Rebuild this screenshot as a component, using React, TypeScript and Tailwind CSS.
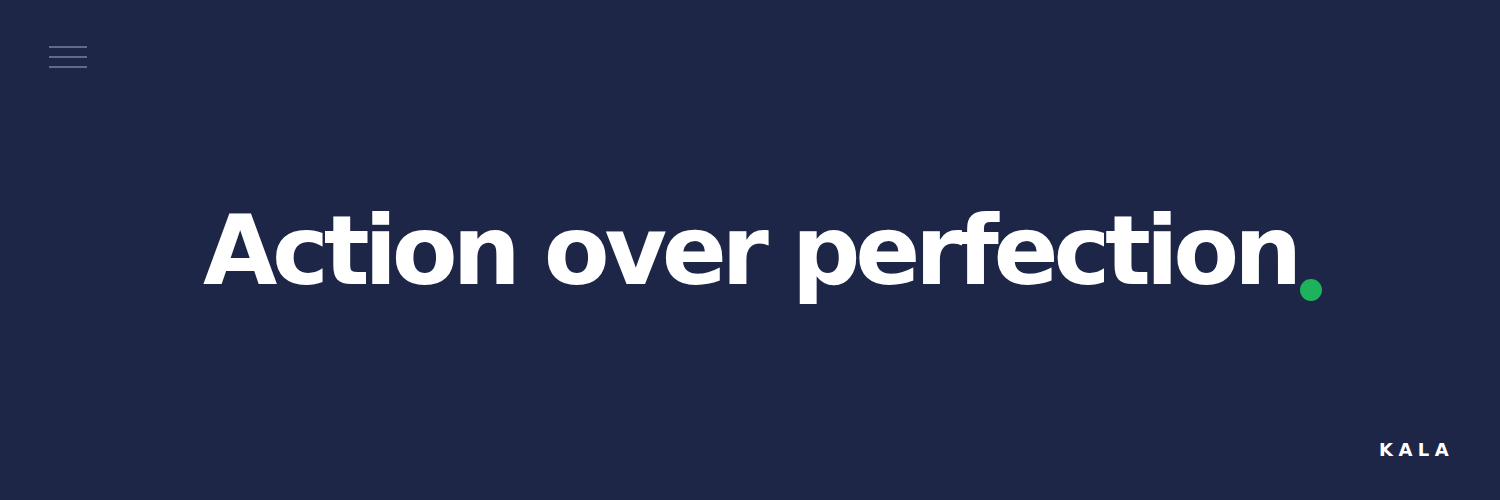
import React from "react";

export default function App() {
  return (
    <div className="relative flex h-[500px] w-full flex-col bg-[#1d2646] font-['DejaVu_Sans',sans-serif] text-white">
      <div className="px-[49px] pt-[46px]">
        <button className="flex w-[38px] flex-col gap-[8px]" aria-label="menu">
          <span className="h-[2px] w-full bg-[#606b8b]" />
          <span className="h-[2px] w-full bg-[#606b8b]" />
          <span className="h-[2px] w-full bg-[#606b8b]" />
        </button>
      </div>

      <div className="flex flex-1 items-center justify-center pb-[2px]">
        <h1 className="relative text-8xl font-bold leading-none tracking-[-0.055em]">
          Action over perfection
          <span className="absolute bottom-[-2px] right-[-25px] h-[22px] w-[22px] rounded-full bg-[#1db35c]" />
        </h1>
      </div>

      <div className="flex justify-end pr-[46px] pb-[36px]">
        <span className="text-lg font-bold tracking-[0.3em]">KALA</span>
      </div>
    </div>
  );
}
